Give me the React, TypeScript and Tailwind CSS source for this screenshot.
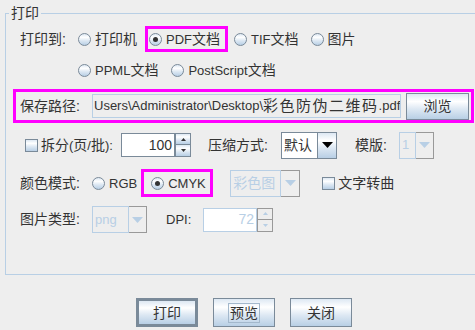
import type { ReactNode } from "react";

// Metal "Ocean" gradient used by buttons, radios and checkboxes
const GRAD = "bg-[linear-gradient(to_bottom,#dde8f3_0%,#ffffff_30%,#dde8f3_60%,#b8cfe5_100%)]";

function L({ children }: { children: ReactNode }) {
  return <span className="text-[13px]">{children}</span>;
}

function Radio({ checked, label, className = "" }: { checked?: boolean; label: ReactNode; className?: string }) {
  return (
    <div className={`flex items-center ${className}`}>
      <span
        className={`flex h-[13px] w-[13px] shrink-0 items-center justify-center rounded-full border border-[#7a8a99] ${GRAD}`}
      >
        {checked && <span className="h-[5px] w-[5px] rounded-full bg-[#333333]" />}
      </span>
      <span className="ml-[4px] whitespace-nowrap">{label}</span>
    </div>
  );
}

function Check({ label, className = "" }: { label: ReactNode; className?: string }) {
  return (
    <div className={`flex items-center ${className}`}>
      <span className={`h-[13px] w-[13px] shrink-0 border border-[#7a8a99] ${GRAD}`} />
      <span className="ml-[3px] whitespace-nowrap">{label}</span>
    </div>
  );
}

function Tri({ color, w = 9, h = 5, up = false }: { color: string; w?: number; h?: number; up?: boolean }) {
  return (
    <svg width={w} height={h} viewBox={`0 0 ${w} ${h}`}>
      <polygon points={up ? `0,${h} ${w},${h} ${w / 2},0` : `0,0 ${w},0 ${w / 2},${h}`} fill={color} />
    </svg>
  );
}

function Spinner({ value, disabled, className = "" }: { value: string; disabled?: boolean; className?: string }) {
  const border = disabled ? "border-[#b8cfe5]" : "border-[#7a8a99]";
  const btnBorder = disabled ? "border-[#999999]" : "border-[#7a8a99]";
  const arrow = disabled ? "#b8cfe5" : "#333333";
  return (
    <div className={`flex h-[24px] w-[70px] ${className}`}>
      <div
        className={`flex flex-1 items-center justify-end border bg-white pr-[2px] text-[14px] ${border} ${
          disabled ? "text-[#b8cfe5]" : "text-[#333333]"
        }`}
      >
        {value}
      </div>
      <div className="flex w-[16px] flex-col">
        <div className={`flex h-[12px] items-center justify-center border ${btnBorder} ${disabled ? "bg-[#eeeeee]" : GRAD}`}>
          <Tri color={arrow} w={5} h={3} up />
        </div>
        <div className={`flex h-[12px] items-center justify-center border border-t-0 ${btnBorder} ${disabled ? "bg-[#eeeeee]" : GRAD}`}>
          <Tri color={arrow} w={5} h={3} />
        </div>
      </div>
    </div>
  );
}

function Combo({
  value,
  disabled,
  width,
  textW,
  className = "",
}: {
  value: ReactNode;
  disabled?: boolean;
  width: string;
  textW: string;
  className?: string;
}) {
  return (
    <div className={`flex h-[27px] ${width} ${className}`}>
      <div
        className={`flex ${textW} items-center overflow-hidden whitespace-nowrap border pl-[2px] ${
          disabled ? "border-[#b8cfe5] bg-[#eeeeee] text-[#b8cfe5]" : "border-[#7a8a99] bg-white text-[#333333]"
        }`}
      >
        {value}
      </div>
      <div
        className={`flex flex-1 items-center justify-center border border-l-0 ${
          disabled ? "border-[#999999] bg-[#eeeeee]" : `border-[#7a8a99] ${GRAD}`
        }`}
      >
        <Tri color={disabled ? "#b8cfe5" : "#000000"} w={11} h={6} />
      </div>
    </div>
  );
}

function Btn({ children, def, focus }: { children: ReactNode; def?: boolean; focus?: boolean }) {
  return (
    <div
      className={`flex h-[29px] w-[62px] items-center justify-center border-[#7a8a99] ${def ? "border-[3px]" : "border"} ${GRAD}`}
    >
      <span className={`px-[1px] leading-[18px] ${focus ? "border border-[#a3b8cc]" : ""}`}>{children}</span>
    </div>
  );
}

export default function App() {
  return (
    <div className="h-[330px] w-[475px] overflow-hidden bg-[#eeeeee] font-['Liberation_Sans','Noto_Sans_CJK_SC',sans-serif] text-[14px] text-[#333333]">
      <div className="relative ml-[5px] mt-[13px] h-[262px] w-[480px] border-b border-l border-t border-[#b8cfe5] pl-[14px]">
        {/* titled border caption */}
        <span className="absolute left-[3px] top-[-11px] bg-[#eeeeee] px-[2px] leading-[20px]">打印</span>

        {/* 打印到 */}
        <div className="mt-[12px] flex h-[26px] items-center">
          <span className="w-[58px]">打印到:</span>
          <Radio label="打印机" />
          <div className="ml-[8px] flex h-[26px] w-[83px] items-center border-[3px] border-[#ff00ff] pl-[1px]">
            <Radio checked label={<><L>PDF</L>文档</>} />
          </div>
          <Radio className="ml-[6px]" label={<><L>TIF</L>文档</>} />
          <Radio className="ml-[12px]" label="图片" />
        </div>
        <div className="mt-[5px] flex h-[26px] items-center pl-[58px]">
          <Radio label={<><L>PPML</L>文档</>} />
          <Radio className="ml-[13px]" label={<><L>PostScript</L>文档</>} />
        </div>

        {/* 保存路径 */}
        <div className="ml-[-7px] mt-[6px] flex h-[34px] w-[461px] items-center border-[3px] border-[#ff00ff] pl-[4px]">
          <span className="w-[72px]">保存路径:</span>
          <div className="flex h-[24px] w-[309px] items-center overflow-hidden whitespace-nowrap border border-[#b8cfe5] bg-[#eeeeee] pl-[1px]">
            <L>Users\Administrator\Desktop\</L>
            <span className="text-[15px] tracking-[1.5px]">彩色防伪二维码</span>
            <L>.pdf</L>
          </div>
          <div className={`ml-[5px] flex h-[27px] w-[63px] items-center justify-center border border-[#7a8a99] ${GRAD}`}>
            浏览
          </div>
        </div>

        {/* 拆分 / 压缩方式 / 模版 */}
        <div className="mt-[9px] flex h-[26px] items-center">
          <Check className="ml-[5px] w-[96px]" label={<>拆分<L>(</L>页<L>/</L>批<L>):</L></>} />
          <Spinner value="100" />
          <span className="ml-[17px] w-[73px]">压缩方式:</span>
          <Combo value="默认" width="w-[56px]" textW="w-[37px]" />
          <span className="ml-[18px] w-[44px]">模版:</span>
          <Combo value={<L>1</L>} disabled width="w-[35px]" textW="w-[17px]" />
        </div>

        {/* 颜色模式 */}
        <div className="mt-[11px] flex h-[28px] items-center">
          <span className="w-[72px]">颜色模式:</span>
          <Radio label={<L>RGB</L>} />
          <div className="ml-[4px] flex h-[28px] w-[72px] items-center border-[3px] border-[#ff00ff] pl-[7px]">
            <Radio checked label={<L>CMYK</L>} />
          </div>
          <Combo value="彩色图" disabled width="w-[70px]" textW="w-[51px]" className="ml-[17px]" />
          <Check className="ml-[22px]" label="文字转曲" />
        </div>

        {/* 图片类型 / DPI */}
        <div className="mt-[9px] flex h-[27px] items-center">
          <span className="w-[72px]">图片类型:</span>
          <Combo value={<L>png</L>} disabled width="w-[55px]" textW="w-[37px]" />
          <span className="ml-[19px] w-[37px]">
            <L>DPI:</L>
          </span>
          <Spinner value="72" disabled />
        </div>
      </div>

      {/* dialog buttons */}
      <div className="ml-[136px] mt-[23px] flex gap-[15px]">
        <Btn def>打印</Btn>
        <Btn focus>预览</Btn>
        <Btn>关闭</Btn>
      </div>
    </div>
  );
}
